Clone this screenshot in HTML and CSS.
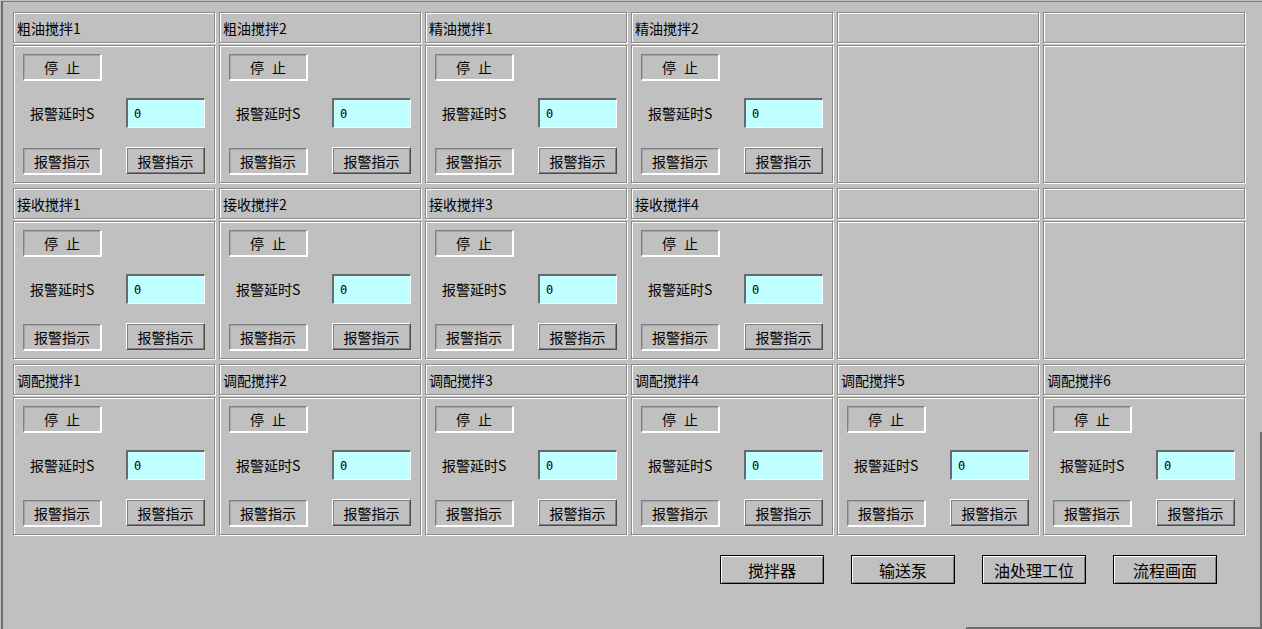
FILE: index.html
```html
<!DOCTYPE html>
<html>
<head>
<meta charset="utf-8">
<link rel="stylesheet" href="styles.css">
</head>
<body>
<div class="screen">
  <div class="grid">
    <div class="cell">
      <div class="title">粗油搅拌1</div>
      <div class="panel">
        <button class="btn sunk stop">停 止</button>
        <span class="lbl">报警延时S</span><input class="num" type="text" value="0">
        <button class="btn sunk alarm-a">报警指示</button><button class="btn raised alarm-b">报警指示</button>
      </div>
    </div>
    <div class="cell">
      <div class="title">粗油搅拌2</div>
      <div class="panel">
        <button class="btn sunk stop">停 止</button>
        <span class="lbl">报警延时S</span><input class="num" type="text" value="0">
        <button class="btn sunk alarm-a">报警指示</button><button class="btn raised alarm-b">报警指示</button>
      </div>
    </div>
    <div class="cell">
      <div class="title">精油搅拌1</div>
      <div class="panel">
        <button class="btn sunk stop">停 止</button>
        <span class="lbl">报警延时S</span><input class="num" type="text" value="0">
        <button class="btn sunk alarm-a">报警指示</button><button class="btn raised alarm-b">报警指示</button>
      </div>
    </div>
    <div class="cell">
      <div class="title">精油搅拌2</div>
      <div class="panel">
        <button class="btn sunk stop">停 止</button>
        <span class="lbl">报警延时S</span><input class="num" type="text" value="0">
        <button class="btn sunk alarm-a">报警指示</button><button class="btn raised alarm-b">报警指示</button>
      </div>
    </div>
    <div class="cell">
      <div class="title"></div>
      <div class="panel"></div>
    </div>
    <div class="cell">
      <div class="title"></div>
      <div class="panel"></div>
    </div>

    <div class="cell">
      <div class="title">接收搅拌1</div>
      <div class="panel">
        <button class="btn sunk stop">停 止</button>
        <span class="lbl">报警延时S</span><input class="num" type="text" value="0">
        <button class="btn sunk alarm-a">报警指示</button><button class="btn raised alarm-b">报警指示</button>
      </div>
    </div>
    <div class="cell">
      <div class="title">接收搅拌2</div>
      <div class="panel">
        <button class="btn sunk stop">停 止</button>
        <span class="lbl">报警延时S</span><input class="num" type="text" value="0">
        <button class="btn sunk alarm-a">报警指示</button><button class="btn raised alarm-b">报警指示</button>
      </div>
    </div>
    <div class="cell">
      <div class="title">接收搅拌3</div>
      <div class="panel">
        <button class="btn sunk stop">停 止</button>
        <span class="lbl">报警延时S</span><input class="num" type="text" value="0">
        <button class="btn sunk alarm-a">报警指示</button><button class="btn raised alarm-b">报警指示</button>
      </div>
    </div>
    <div class="cell">
      <div class="title">接收搅拌4</div>
      <div class="panel">
        <button class="btn sunk stop">停 止</button>
        <span class="lbl">报警延时S</span><input class="num" type="text" value="0">
        <button class="btn sunk alarm-a">报警指示</button><button class="btn raised alarm-b">报警指示</button>
      </div>
    </div>
    <div class="cell">
      <div class="title"></div>
      <div class="panel"></div>
    </div>
    <div class="cell">
      <div class="title"></div>
      <div class="panel"></div>
    </div>

    <div class="cell">
      <div class="title">调配搅拌1</div>
      <div class="panel">
        <button class="btn sunk stop">停 止</button>
        <span class="lbl">报警延时S</span><input class="num" type="text" value="0">
        <button class="btn sunk alarm-a">报警指示</button><button class="btn raised alarm-b">报警指示</button>
      </div>
    </div>
    <div class="cell">
      <div class="title">调配搅拌2</div>
      <div class="panel">
        <button class="btn sunk stop">停 止</button>
        <span class="lbl">报警延时S</span><input class="num" type="text" value="0">
        <button class="btn sunk alarm-a">报警指示</button><button class="btn raised alarm-b">报警指示</button>
      </div>
    </div>
    <div class="cell">
      <div class="title">调配搅拌3</div>
      <div class="panel">
        <button class="btn sunk stop">停 止</button>
        <span class="lbl">报警延时S</span><input class="num" type="text" value="0">
        <button class="btn sunk alarm-a">报警指示</button><button class="btn raised alarm-b">报警指示</button>
      </div>
    </div>
    <div class="cell">
      <div class="title">调配搅拌4</div>
      <div class="panel">
        <button class="btn sunk stop">停 止</button>
        <span class="lbl">报警延时S</span><input class="num" type="text" value="0">
        <button class="btn sunk alarm-a">报警指示</button><button class="btn raised alarm-b">报警指示</button>
      </div>
    </div>
    <div class="cell">
      <div class="title">调配搅拌5</div>
      <div class="panel">
        <button class="btn sunk stop">停 止</button>
        <span class="lbl">报警延时S</span><input class="num" type="text" value="0">
        <button class="btn sunk alarm-a">报警指示</button><button class="btn raised alarm-b">报警指示</button>
      </div>
    </div>
    <div class="cell">
      <div class="title">调配搅拌6</div>
      <div class="panel">
        <button class="btn sunk stop">停 止</button>
        <span class="lbl">报警延时S</span><input class="num" type="text" value="0">
        <button class="btn sunk alarm-a">报警指示</button><button class="btn raised alarm-b">报警指示</button>
      </div>
    </div>
  </div>

  <div class="nav">
    <button class="navbtn">搅拌器</button>
    <button class="navbtn">输送泵</button>
    <button class="navbtn">油处理工位</button>
    <button class="navbtn">流程画面</button>
  </div>
</div>
</body>
</html>
```

FILE: styles.css
```css
body {
    margin: 0;
    padding: 1px 0 0 1px;
    background-color: #c0c0c0;
    font-family: "DejaVu Sans", "Noto Sans CJK SC", sans-serif;
    font-size: 14px;
    color: #000;
}

.screen {
    position: relative;
    height: 628px;
    box-sizing: border-box;
    border-top: 1px solid #7a7a7a;
    border-left: 2px solid #6e6e6e;
    padding: 10px 0 0 10px;
}

/* right and bottom pieces of the window frame */
.screen::before {
    content: "";
    position: absolute;
    left: 1257px;
    top: 430px;
    width: 2px;
    height: 197px;
    background-color: #6e6e6e;
}
.screen::after {
    content: "";
    position: absolute;
    left: 963px;
    top: 625px;
    width: 297px;
    height: 2px;
    background-color: #6e6e6e;
}

.grid {
    display: grid;
    grid-template-columns: repeat(6, 202px);
    column-gap: 4px;
    row-gap: 5px;
}

.cell {
    display: flex;
    flex-direction: column;
    gap: 2px;
}

.title,
.panel {
    box-sizing: border-box;
    border: 1px solid #8c8c8c;
    box-shadow: inset 1px 1px 0 #fff, 1px 1px 0 #fff;
}

.title {
    height: 31px;
    display: flex;
    align-items: center;
    padding-left: 3px;
    line-height: 16px;
    font-family: "Noto Sans CJK SC", sans-serif;
}

.panel {
    height: 138px;
    padding: 8px 9px 0 9px;
    display: grid;
    grid-template-columns: 79px 24px 79px;
    grid-template-rows: 27px 17px 30px 19px 28px;
    align-content: start;
    align-items: center;
}

.stop {
    grid-row: 1;
    grid-column: 1;
    word-spacing: 5px;
}
.lbl {
    grid-row: 3;
    grid-column: 1 / 3;
    padding-left: 7px;
    line-height: 16px;
    font-family: "Noto Sans CJK SC", sans-serif;
}
.num {
    grid-row: 3;
    grid-column: 3;
}
.alarm-a {
    grid-row: 5;
    grid-column: 1;
    align-self: end;
}
.alarm-b {
    grid-row: 5;
    grid-column: 3;
    align-self: start;
}

.btn {
    box-sizing: border-box;
    width: 79px;
    height: 27px;
    padding: 0;
    background-color: #c0c0c0;
    font-family: "Noto Sans CJK SC", sans-serif;
    font-size: 14px;
    line-height: 16px;
    color: #000;
}
.sunk {
    border-style: solid;
    border-width: 1px 2px 2px 1px;
    border-color: #808080 #fff #fff #808080;
    box-shadow: inset 1px 1px 0 #a4a4a4;
}
.raised {
    border: 1px solid;
    border-color: #fff #4c4c4c #4c4c4c #fff;
    box-shadow: inset 1px 1px 0 #808080, inset -1px -1px 0 #808080;
}

.num {
    box-sizing: border-box;
    width: 79px;
    height: 30px;
    margin: 0;
    padding: 0 0 0 6px;
    border-style: solid;
    border-width: 2px 1px 1px 2px;
    border-color: #6a6a6a #fff #fff #6a6a6a;
    background-color: #c0ffff;
    font-family: "DejaVu Sans Mono", monospace;
    font-size: 12px;
    color: #000;
    outline: none;
}

.nav {
    display: flex;
    justify-content: flex-end;
    gap: 27px;
    width: 1204px;
    margin-top: 20px;
}

.navbtn {
    box-sizing: border-box;
    width: 104px;
    height: 29px;
    margin: 0;
    padding: 0;
    border: 1px solid #000;
    box-shadow: inset 1px 1px 0 #fff, inset -1px -1px 0 #808080;
    background-color: #c0c0c0;
    font-family: "Noto Sans CJK SC", sans-serif;
    font-size: 16px;
    line-height: 18px;
    color: #000;
}
```
